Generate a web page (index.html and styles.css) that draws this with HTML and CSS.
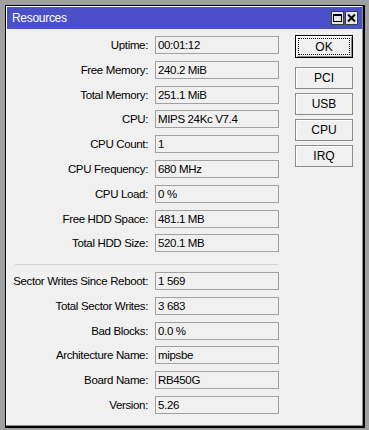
FILE: index.html
```html
<!DOCTYPE html>
<html>
<head>
<meta charset="utf-8">
<link rel="stylesheet" href="styles.css">
</head>
<body>
<div class="window">
  <div class="titlebar">
    <span class="title">Resources</span>
    <div class="tbtns">
      <span class="tbtn"><svg width="11" height="10" viewBox="0 0 11 10"><rect x="1.5" y="1.5" width="8" height="7" fill="none" stroke="#000" stroke-width="1"/><rect x="1" y="1" width="9" height="2" fill="#000"/></svg></span>
      <span class="tbtn"><svg width="11" height="10" viewBox="0 0 11 10"><path d="M2 1.5 L9 8.5 M9 1.5 L2 8.5" stroke="#000" stroke-width="2"/></svg></span>
    </div>
  </div>
  <div class="content">
    <div class="form">
      <div class="group">
        <div class="row"><span class="lbl">Uptime:</span><span class="fld">00:01:12</span></div>
        <div class="row"><span class="lbl">Free Memory:</span><span class="fld">240.2 MiB</span></div>
        <div class="row"><span class="lbl">Total Memory:</span><span class="fld">251.1 MiB</span></div>
        <div class="row"><span class="lbl">CPU:</span><span class="fld">MIPS 24Kc V7.4</span></div>
        <div class="row"><span class="lbl">CPU Count:</span><span class="fld">1</span></div>
        <div class="row"><span class="lbl">CPU Frequency:</span><span class="fld">680 MHz</span></div>
        <div class="row"><span class="lbl">CPU Load:</span><span class="fld">0 %</span></div>
        <div class="row"><span class="lbl">Free HDD Space:</span><span class="fld">481.1 MB</span></div>
        <div class="row"><span class="lbl">Total HDD Size:</span><span class="fld">520.1 MB</span></div>
      </div>
      <div class="sep"></div>
      <div class="group">
        <div class="row"><span class="lbl">Sector Writes Since Reboot:</span><span class="fld">1 569</span></div>
        <div class="row"><span class="lbl">Total Sector Writes:</span><span class="fld">3 683</span></div>
        <div class="row"><span class="lbl">Bad Blocks:</span><span class="fld">0.0 %</span></div>
        <div class="row"><span class="lbl">Architecture Name:</span><span class="fld">mipsbe</span></div>
        <div class="row"><span class="lbl">Board Name:</span><span class="fld">RB450G</span></div>
        <div class="row"><span class="lbl">Version:</span><span class="fld">5.26</span></div>
      </div>
    </div>
    <div class="buttons">
      <button class="btn ok">OK</button>
      <div class="btn-list">
        <button class="btn">PCI</button>
        <button class="btn">USB</button>
        <button class="btn">CPU</button>
        <button class="btn">IRQ</button>
      </div>
    </div>
  </div>
</div>
</body>
</html>
```
FILE: styles.css
```css
html, body {
  margin: 0;
  padding: 0;
}
body {
  background: #a0a0a0;
  width: 369px;
  height: 430px;
  padding: 5px 0 0 5px;
  box-sizing: border-box;
  font-family: "Liberation Sans", Arial, sans-serif;
  font-size: 11.5px;
  letter-spacing: -0.35px;
  color: #000;
}
.window {
  width: 360px;
  height: 423px;
  box-sizing: border-box;
  border: 1px solid #000;
  border-right-width: 2px;
  border-bottom-width: 2px;
  background: #f0f0f0;
  padding: 1px;
  box-shadow: inset -1px -1px 0 #8a8a8a, inset 1px 1px 0 #ffffff;
  display: flex;
  flex-direction: column;
}
.titlebar {
  height: 22px;
  background: #4b4fc8;
  display: flex;
  align-items: center;
  justify-content: space-between;
  padding: 0 4px 0 5px;
}
.title {
  color: #fff;
  font-size: 12px;
  letter-spacing: -0.3px;
}
.tbtns {
  display: flex;
  gap: 1px;
}
.tbtn {
  width: 13px;
  height: 14px;
  box-sizing: border-box;
  background: #e6e6e6;
  border: 1px solid #3a3a3a;
  display: flex;
  align-items: center;
  justify-content: center;
}
.tbtn svg {
  display: block;
}
.content {
  flex: 1;
  display: flex;
  padding: 6px 10px 0 1px;
}
.form {
  display: flex;
  flex-direction: column;
  padding-top: 1px;
}
.group {
  display: flex;
  flex-direction: column;
  gap: 6.8px;
}
.row {
  display: flex;
  align-items: center;
  gap: 7px;
}
.lbl {
  width: 140px;
  display: flex;
  justify-content: flex-end;
  white-space: nowrap;
}
.fld {
  width: 124px;
  height: 18px;
  box-sizing: border-box;
  border: 1px solid #a0a0a0;
  padding: 0 2px;
  line-height: 16px;
  white-space: nowrap;
}
.sep {
  height: 1px;
  width: 263px;
  margin: 11.6px 0 7px 7px;
  background: #d4d4d4;
}
.buttons {
  margin-left: 16px;
  display: flex;
  flex-direction: column;
}
.btn-list {
  display: flex;
  flex-direction: column;
  gap: 4px;
  margin-top: 9px;
}
.btn {
  width: 58px;
  height: 22px;
  box-sizing: border-box;
  background: #f0f0f0;
  border: 1px solid #8c8c8c;
  box-shadow: inset 1px 1px 0 #ffffff;
  font-family: inherit;
  font-size: 12px;
  letter-spacing: 0;
  color: #000;
  padding: 0;
  margin: 0;
}
.btn.ok {
  height: 23px;
  border: 1px solid #000;
  box-shadow: inset 1px 1px 0 #ffffff, inset -1px -1px 0 #8c8c8c;
  outline: 1px dotted #000;
  outline-offset: -4px;
}
```
